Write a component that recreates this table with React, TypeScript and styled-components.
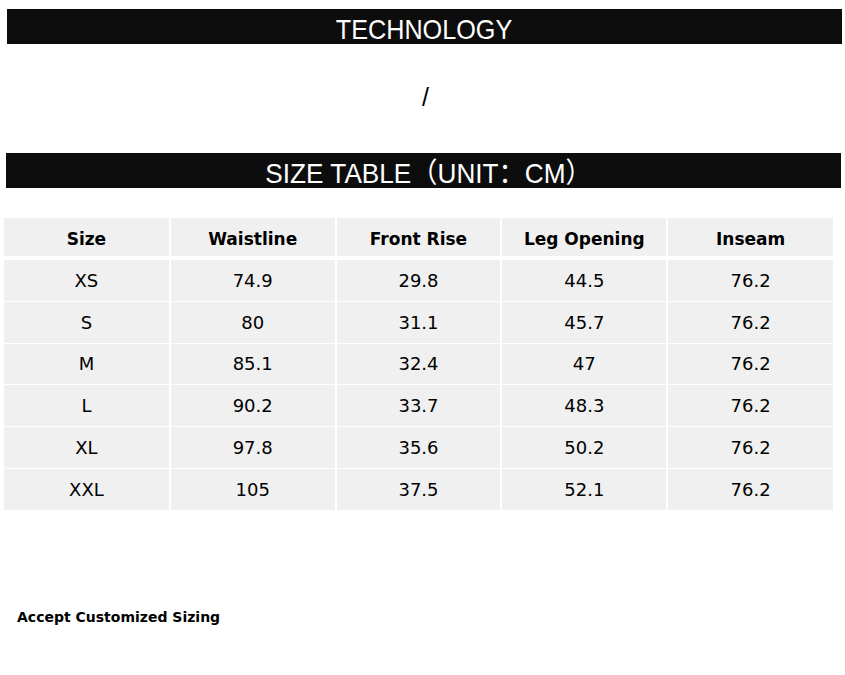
import React from 'react'
import styled, { createGlobalStyle } from 'styled-components'

const GlobalStyle = createGlobalStyle`
  html, body {
    margin: 0;
    padding: 0;
    background: #ffffff;
  }
  body {
    font-family: 'DejaVu Sans', Verdana, sans-serif;
    color: #000;
  }
`

const Page = styled.div`
  width: 845px;
  padding-top: 9px;
`

const Banner = styled.div<{ $inset: number; $nudge?: number }>`
  margin: 0 ${(p) => 845 - 835 - p.$inset}px 0 ${(p) => p.$inset}px;
  height: 35px;
  background: #0d0d0d;
  color: #ffffff;
  display: flex;
  align-items: center;
  justify-content: center;
  overflow: hidden;
  font-family: 'Liberation Sans', 'Noto Sans CJK SC', Arial, sans-serif;
  font-size: 28px;
  line-height: 1;
  padding: 6px 0 0 ${(p) => p.$nudge ?? 0}px;
  box-sizing: border-box;
`

const BannerText = styled.span<{ $scale: number }>`
  display: inline-block;
  transform: scaleX(${(p) => p.$scale});
  white-space: nowrap;
`

const Slash = styled.div`
  height: 109px;
  display: flex;
  align-items: center;
  justify-content: center;
  font-family: 'Liberation Sans', Arial, sans-serif;
  font-size: 25px;
  padding: 0 0 2px 6px;
  box-sizing: border-box;
`

const TableWrap = styled.div`
  padding: 30px 12px 0 4px;
`

const Table = styled.table`
  width: 829px;
  border-collapse: collapse;
  table-layout: fixed;
  font-family: 'DejaVu Sans', Verdana, sans-serif;
`

const HeadCell = styled.th`
  background: #f0f0f0;
  height: 40px;
  padding: 4px 0 0;
  box-sizing: border-box;
  font-size: 17px;
  font-weight: bold;
  text-align: center;
  border-left: 2px solid #fff;
  border-bottom: 4px solid #fff;
  &:first-child {
    border-left: none;
  }
`

const Cell = styled.td`
  background: #f0f0f0;
  height: 40.8px;
  padding: 0;
  font-size: 18px;
  text-align: center;
  border-left: 2px solid #fff;
  border-top: 1px solid #fff;
  &:first-child {
    border-left: none;
  }
`

const FirstRow = styled.tr`
  td {
    border-top: none;
  }
`

const Note = styled.p`
  margin: 99px 0 0 17px;
  font-size: 14px;
  font-weight: bold;
`

const columns = ['Size', 'Waistline', 'Front Rise', 'Leg Opening', 'Inseam']

const rows = [
  ['XS', '74.9', '29.8', '44.5', '76.2'],
  ['S', '80', '31.1', '45.7', '76.2'],
  ['M', '85.1', '32.4', '47', '76.2'],
  ['L', '90.2', '33.7', '48.3', '76.2'],
  ['XL', '97.8', '35.6', '50.2', '76.2'],
  ['XXL', '105', '37.5', '52.1', '76.2'],
]

export default function App() {
  return (
    <Page>
      <GlobalStyle />
      <Banner $inset={7}>
        <BannerText $scale={0.9}>TECHNOLOGY</BannerText>
      </Banner>
      <Slash>/</Slash>
      <Banner $inset={6} $nudge={10}>
        <BannerText $scale={0.935}>SIZE TABLE（UNIT：CM）</BannerText>
      </Banner>
      <TableWrap>
        <Table>
          <thead>
            <tr>
              {columns.map((c) => (
                <HeadCell key={c}>{c}</HeadCell>
              ))}
            </tr>
          </thead>
          <tbody>
            {rows.map((r, i) => {
              const Row = i === 0 ? FirstRow : 'tr'
              return (
                <Row key={r[0]}>
                  {r.map((v, j) => (
                    <Cell key={j}>{v}</Cell>
                  ))}
                </Row>
              )
            })}
          </tbody>
        </Table>
      </TableWrap>
      <Note>Accept Customized Sizing</Note>
    </Page>
  )
}
